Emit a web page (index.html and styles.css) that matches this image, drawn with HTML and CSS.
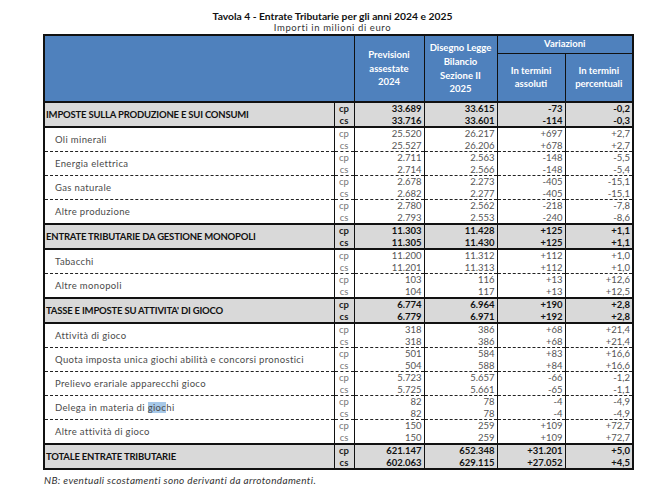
FILE: index.html
```html
<!DOCTYPE html>
<html lang="it">
<head>
<meta charset="utf-8">
<title>Tavola 4</title>
<link rel="stylesheet" href="styles.css">
</head>
<body>
<div class="page">
  <div class="title">Tavola 4 - Entrate Tributarie per gli anni 2024 e 2025</div>
  <div class="subtitle">Importi in milioni di euro</div>
  <table class="tbl">
    <colgroup>
      <col class="c-label"><col class="c-kind"><col class="c-n1"><col class="c-n2"><col class="c-n3"><col class="c-n4">
    </colgroup>
    <thead>
      <tr class="h1">
        <th rowspan="2" colspan="2" class="h-empty"></th>
        <th rowspan="2">Previsioni<br>assestate<br>2024</th>
        <th rowspan="2">Disegno Legge<br>Bilancio<br>Sezione II<br>2025</th>
        <th colspan="2" class="h-var">Variazioni</th>
      </tr>
      <tr class="h2">
        <th>In termini<br>assoluti</th>
        <th>In termini<br>percentuali</th>
      </tr>
    </thead>
    <tbody id="body"></tbody>
  </table>
  <div class="note">NB: eventuali scostamenti sono derivanti da arrotondamenti.</div>
</div>
<script src="script.js"></script>
</body>
</html>
```
FILE: styles.css
```css
* { box-sizing: border-box; }
body { margin: 0; background: #fff; font-family: Lato, "Open Sans", sans-serif; color: #222; }
.page { width: 665px; padding-top: 11px; }
.title { text-align: center; font-weight: 700; font-size: 10.3px; line-height: 11px; color: #111; letter-spacing: 0; }
.subtitle { text-align: center; font-size: 9.5px; line-height: 12px; color: #333; letter-spacing: 0.6px; }
.tbl { margin-left: 43px; border-collapse: collapse; table-layout: fixed; width: 589px; border: 2px solid #111; }
.c-label { width: 290px; } .c-kind { width: 20px; } .c-n1 { width: 70px; } .c-n2 { width: 73px; } .c-n3 { width: 68px; } .c-n4 { width: 68px; }
thead th { background: #4f81bd; color: #fff; font-weight: 700; font-size: 9.5px; line-height: 13.6px; border: 1px solid #111; text-align: center; vertical-align: middle; padding: 0; }
.h1 th { height: 18px; }
.h2 th { height: 49px; }
thead tr:last-child th, thead .h1 th[rowspan] { border-bottom: 2px solid #111; }
.h-empty { border-right: 1px solid #111; }
tbody td { font-size: 9.5px; line-height: 11px; height: 11px; padding: 0 2px; border-left: 1px solid #111; border-right: 1px solid #111; white-space: nowrap; }
tr.r1 td { height: 12px; line-height: 12px; }
td.lbl { padding-left: 10px; vertical-align: middle; letter-spacing: 0.35px; color: #4a4a4a; }
td.kind { text-align: center; color: #777; padding: 0; }
td.num { text-align: right; color: #555; }
tr.sec td { background: #d9d9d9; font-weight: 700; color: #111; }
tr.sec td.lbl { padding-left: 1px; letter-spacing: -0.2px; font-size: 9.5px; }
tr.sec td.kind { color: #222; }
tr.top td { border-top: 2px solid #111; }
tr.dot td { border-top: 1px dashed #222; }
tr.last td { border-bottom: 2px solid #111; }
.hl { background: #a6c8e8; }
.note { margin-left: 44px; margin-top: 4px; font-size: 10px; font-style: italic; color: #333; letter-spacing: 0.35px; }
```
FILE: script.js
```js
const rows = [
  ["IMPOSTE SULLA PRODUZIONE E SUI CONSUMI", 1, ["33.689","33.615","-73","-0,2"], ["33.716","33.601","-114","-0,3"]],
  ["Oli minerali", 0, ["25.520","26.217","+697","+2,7"], ["25.527","26.206","+678","+2,7"]],
  ["Energia elettrica", 0, ["2.711","2.563","-148","-5,5"], ["2.714","2.566","-148","-5,4"]],
  ["Gas naturale", 0, ["2.678","2.273","-405","-15,1"], ["2.682","2.277","-405","-15,1"]],
  ["Altre produzione", 0, ["2.780","2.562","-218","-7,8"], ["2.793","2.553","-240","-8,6"]],
  ["ENTRATE TRIBUTARIE DA GESTIONE MONOPOLI", 1, ["11.303","11.428","+125","+1,1"], ["11.305","11.430","+125","+1,1"]],
  ["Tabacchi", 0, ["11.200","11.312","+112","+1,0"], ["11.201","11.313","+112","+1,0"]],
  ["Altre monopoli", 0, ["103","116","+13","+12,6"], ["104","117","+13","+12,5"]],
  ["TASSE E IMPOSTE SU ATTIVITA' DI GIOCO", 1, ["6.774","6.964","+190","+2,8"], ["6.779","6.971","+192","+2,8"]],
  ["Attività di gioco", 0, ["318","386","+68","+21,4"], ["318","386","+68","+21,4"]],
  ["Quota imposta unica giochi abilità e concorsi pronostici", 0, ["501","584","+83","+16,6"], ["504","588","+84","+16,6"]],
  ["Prelievo erariale apparecchi gioco", 0, ["5.723","5.657","-66","-1,2"], ["5.725","5.661","-65","-1,1"]],
  ["Delega in materia di <span class=\"hl\">gioc</span>hi", 0, ["82","78","-4","-4,9"], ["82","78","-4","-4,9"]],
  ["Altre attività di gioco", 0, ["150","259","+109","+72,7"], ["150","259","+109","+72,7"]],
  ["TOTALE ENTRATE TRIBUTARIE", 1, ["621.147","652.348","+31.201","+5,0"], ["602.063","629.115","+27.052","+4,5"]]
];
const body = document.getElementById("body");
let html = "";
rows.forEach((r, i) => {
  const [label, sec, cp, cs] = r;
  const prevSec = i > 0 && rows[i - 1][1];
  const kind = sec ? "sec" : "det";
  const border = (sec || prevSec || i === 0) ? " top" : " dot";
  const lastCls = i === rows.length - 1 ? " last" : "";
  html += `<tr class="${kind}${border} r1"><td class="lbl" rowspan="2">${label}</td><td class="kind">cp</td>` +
    cp.map(v => `<td class="num">${v}</td>`).join("") + `</tr>`;
  html += `<tr class="${kind}${lastCls} r2"><td class="kind">cs</td>` +
    cs.map(v => `<td class="num">${v}</td>`).join("") + `</tr>`;
});
body.innerHTML = html;
```
